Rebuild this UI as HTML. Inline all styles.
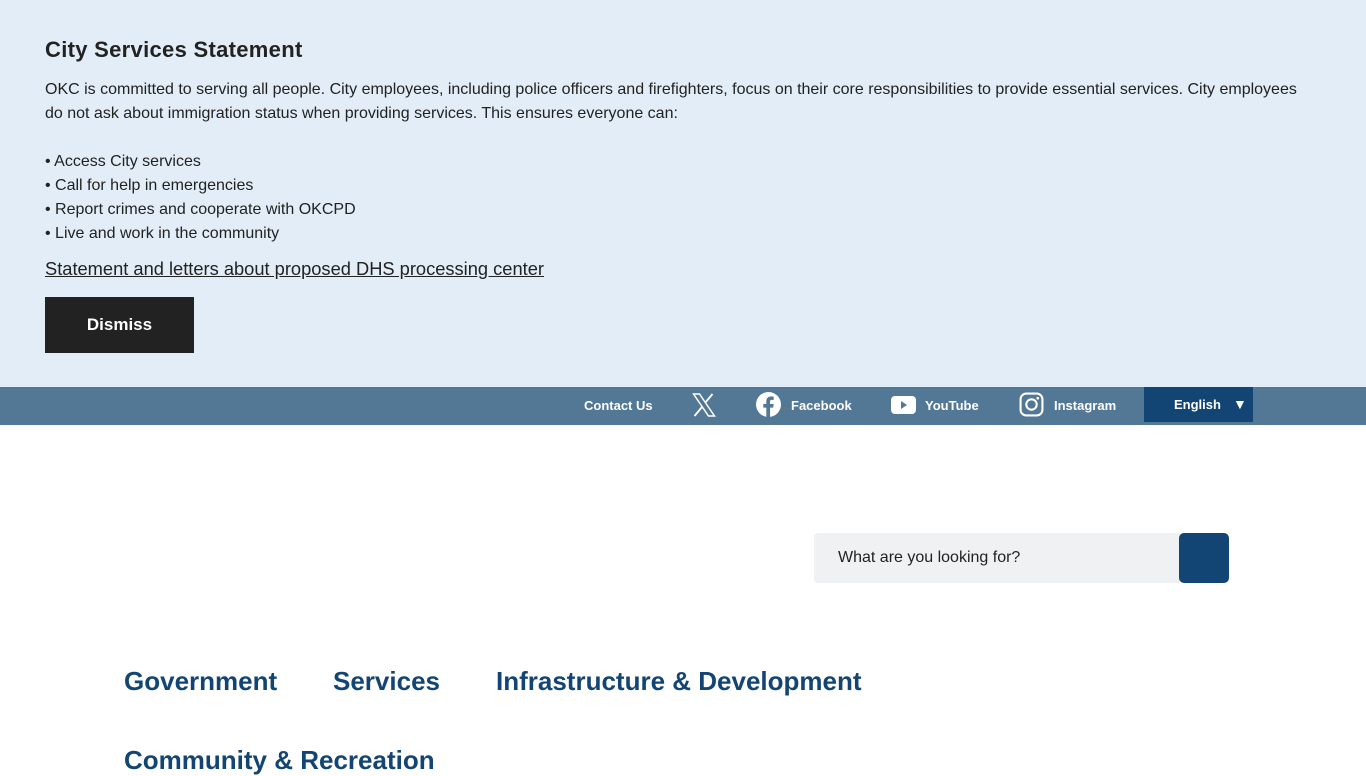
<!DOCTYPE html>
<html><head><meta charset="utf-8"><style>
*{margin:0;padding:0;box-sizing:border-box}
body{width:1366px;height:768px;overflow:hidden;font-family:"Liberation Sans",Arial,sans-serif;background:#fff;color:#222}
.banner{position:absolute;left:0;top:0;width:1366px;height:387px;background:#e3edf7}
.banner h2{position:absolute;left:45px;top:37px;font-size:22px;font-weight:bold;color:#222;letter-spacing:.3px}
.banner .p{position:absolute;left:45px;top:78px;width:1268px;font-size:16px;line-height:24px;color:#222}
.banner a{position:absolute;left:45px;top:258px;font-size:18.3px;color:#222;text-decoration:underline}
.btn{position:absolute;left:45px;top:297px;width:149px;height:56px;background:#222;color:#fff;font-weight:bold;font-size:17px;display:flex;align-items:center;justify-content:center}
.bar{position:absolute;left:0;top:387px;width:1366px;height:38px;background:#537896;color:#fff;font-size:13px;font-weight:bold}
.bar span,.bar svg{position:absolute}
.lang{position:absolute;left:1144px;top:0;width:109px;height:35px;background:#124574}
.search{position:absolute;left:814px;top:533px;width:366px;height:50px;background:#eff1f2;border-radius:4px 0 0 4px;font-size:16px;color:#222;padding:16px 24px}
.sbtn{position:absolute;left:1179px;top:533px;width:50px;height:50px;background:#124574;border-radius:5px}
.nav{position:absolute;font-size:26px;font-weight:bold;color:#134574}
</style></head><body>
<div class="banner">
<h2>City Services Statement</h2>
<div class="p">OKC is committed to serving all people. City employees, including police officers and firefighters, focus on their core responsibilities to provide essential services. City employees do not ask about immigration status when providing services. This ensures everyone can:<br><br>• Access City services<br>• Call for help in emergencies<br>• Report crimes and cooperate with OKCPD<br>• Live and work in the community</div>
<a>Statement and letters about proposed DHS processing center</a>
<div class="btn">Dismiss</div>
</div>
<div class="bar">
<span style="left:584px;top:11px">Contact Us</span>
<svg style="left:691px;top:6px" width="25" height="24" viewBox="0 0 24 24"><path d="M2 1h6l15 22h-6z" fill="none" stroke="#fff" stroke-width="1.5"/><path d="M21 1L13.5 10M10.5 14L3 23" stroke="#fff" stroke-width="1.8"/></svg>
<svg style="left:756px;top:5px" width="25" height="25" viewBox="0 0 24 24"><circle cx="12" cy="12" r="12" fill="#fff"/><path d="M13.5 24V15h3l.5-3.5h-3.5V9.3c0-1 .3-1.7 1.8-1.7H17V4.5c-.3 0-1.4-.2-2.7-.2-2.7 0-4.4 1.6-4.4 4.6v2.6H7V15h2.9v9z" fill="#537896"/></svg>
<span style="left:791px;top:11px">Facebook</span>
<svg style="left:891px;top:9px" width="25" height="18" viewBox="0 0 25 18"><rect width="25" height="18" rx="4" fill="#fff"/><path d="M10 5l6 4-6 4z" fill="#537896"/></svg>
<span style="left:925px;top:11px">YouTube</span>
<svg style="left:1019px;top:5px" width="25" height="25" viewBox="0 0 24 24"><rect x="1.5" y="1.5" width="21" height="21" rx="5.5" fill="none" stroke="#fff" stroke-width="2"/><circle cx="12" cy="12" r="5" fill="none" stroke="#fff" stroke-width="2"/><circle cx="18" cy="6" r="1.3" fill="#fff"/></svg>
<span style="left:1054px;top:11px">Instagram</span>
<div class="lang"><span style="left:30px;top:10px">English</span><span style="left:89px;top:9px;font-size:14px">▼</span></div>
</div>
<div class="search">What are you looking for?</div>
<div class="sbtn"></div>
<div class="nav" style="left:124px;top:666px">Government</div>
<div class="nav" style="left:333px;top:666px">Services</div>
<div class="nav" style="left:496px;top:666px">Infrastructure &amp; Development</div>
<div class="nav" style="left:124px;top:745px">Community &amp; Recreation</div>
</body></html>
